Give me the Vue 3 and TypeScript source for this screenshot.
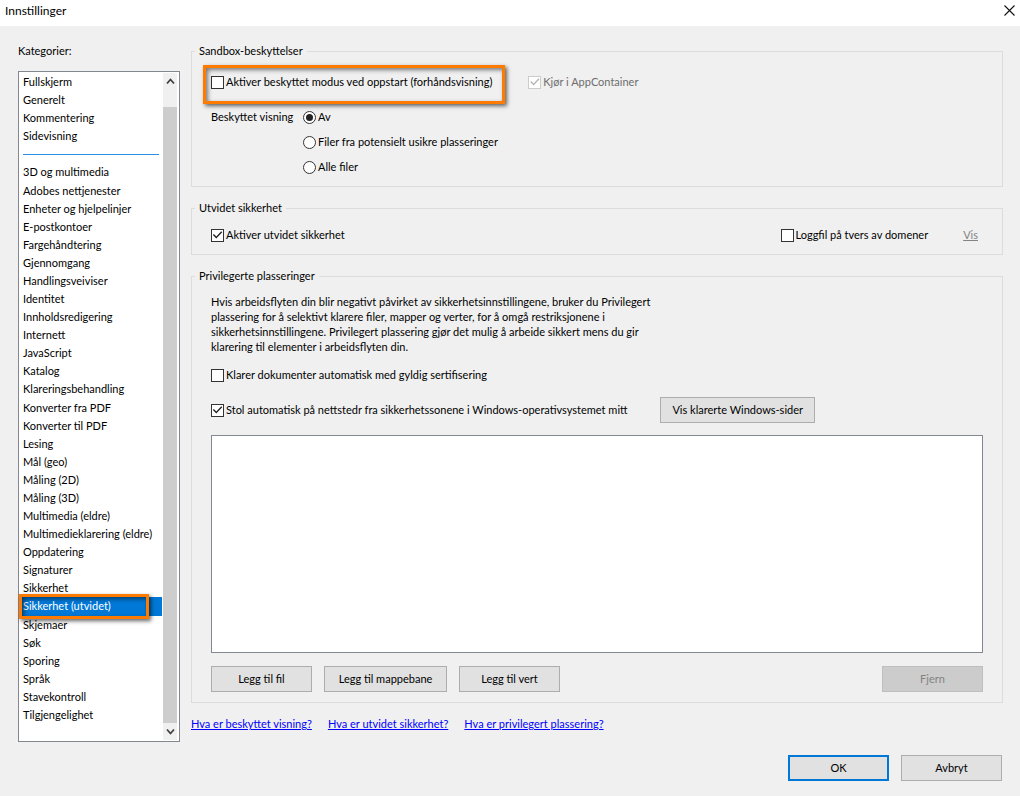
<script setup lang="ts">
import { ref } from 'vue'

const generalCategories: string[] = ['Fullskjerm', 'Generelt', 'Kommentering', 'Sidevisning']
const featureCategories: string[] = [
  '3D og multimedia',
  'Adobes nettjenester',
  'Enheter og hjelpelinjer',
  'E-postkontoer',
  'Fargehåndtering',
  'Gjennomgang',
  'Handlingsveiviser',
  'Identitet',
  'Innholdsredigering',
  'Internett',
  'JavaScript',
  'Katalog',
  'Klareringsbehandling',
  'Konverter fra PDF',
  'Konverter til PDF',
  'Lesing',
  'Mål (geo)',
  'Måling (2D)',
  'Måling (3D)',
  'Multimedia (eldre)',
  'Multimedieklarering (eldre)',
  'Oppdatering',
  'Signaturer',
  'Sikkerhet',
  'Sikkerhet (utvidet)',
  'Skjemaer',
  'Søk',
  'Sporing',
  'Språk',
  'Stavekontroll',
  'Tilgjengelighet',
]

const highlighted = 'Sikkerhet (utvidet)'
const selected = ref<string>(highlighted)
const protectedMode = ref(false)
const appContainer = ref(true)
const protectedView = ref<string>('off')
const viewOptions = [
  { value: 'off', label: 'Av' },
  { value: 'unsafe', label: 'Filer fra potensielt usikre plasseringer' },
  { value: 'all', label: 'Alle filer' },
]
const enhanced = ref(true)
const crossDomainLog = ref(false)
const trustCertified = ref(false)
const trustZones = ref(true)
const helpLinks: string[] = [
  'Hva er beskyttet visning?',
  'Hva er utvidet sikkerhet?',
  'Hva er privilegert plassering?',
]
</script>

<template>
  <div class="dialog">
    <header class="titlebar">
      <h1>Innstillinger</h1>
      <button class="close" type="button" aria-label="Lukk">
        <svg width="11" height="11" viewBox="0 0 11 11" aria-hidden="true">
          <path d="M0.5 0.5L10.5 10.5M10.5 0.5L0.5 10.5" stroke="#111" stroke-width="1.1" fill="none" />
        </svg>
      </button>
    </header>

    <main class="content">
      <section class="sidebar">
        <h2 id="categories-label">Kategorier:</h2>
        <div class="listbox">
          <ul aria-labelledby="categories-label">
            <li v-for="name in generalCategories" :key="name">
              <button type="button" :class="{ active: selected === name }" @click="selected = name">{{ name }}</button>
            </li>
            <li class="separator" role="separator"></li>
            <li v-for="name in featureCategories" :key="name" :class="{ marked: name === highlighted }">
              <button type="button" :class="{ active: selected === name }" @click="selected = name">{{ name }}</button>
            </li>
          </ul>
          <div class="scrollbar">
            <button class="arrow up" type="button" aria-label="Rull opp">
              <svg width="9" height="7" viewBox="0 0 9 7" aria-hidden="true">
                <path d="M1 5.5L4.5 1.5L8 5.5" stroke="#404040" stroke-width="1.8" fill="none" />
              </svg>
            </button>
            <div class="thumb"></div>
            <button class="arrow down" type="button" aria-label="Rull ned">
              <svg width="9" height="7" viewBox="0 0 9 7" aria-hidden="true">
                <path d="M1 1.5L4.5 5.5L8 1.5" stroke="#404040" stroke-width="1.8" fill="none" />
              </svg>
            </button>
          </div>
        </div>
      </section>

      <div class="panels">
        <fieldset class="sandbox">
          <legend>Sandbox-beskyttelser</legend>
          <div class="row first">
            <label class="option marked"><input v-model="protectedMode" type="checkbox" />Aktiver beskyttet modus ved oppstart (forhåndsvisning)</label>
            <label class="option disabled"><input v-model="appContainer" type="checkbox" disabled />Kjør i AppContainer</label>
          </div>
          <div class="view" role="radiogroup" aria-labelledby="view-label">
            <span id="view-label">Beskyttet visning</span>
            <div class="radios">
              <label v-for="option in viewOptions" :key="option.value" class="option">
                <input v-model="protectedView" type="radio" name="protected-view" :value="option.value" />{{ option.label }}
              </label>
            </div>
          </div>
        </fieldset>

        <fieldset class="enhanced">
          <legend>Utvidet sikkerhet</legend>
          <div class="row">
            <label class="option"><input v-model="enhanced" type="checkbox" />Aktiver utvidet sikkerhet</label>
            <label class="option log"><input v-model="crossDomainLog" type="checkbox" />Loggfil på tvers av domener</label>
            <a class="show" href="#">Vis</a>
          </div>
        </fieldset>

        <fieldset class="privileged">
          <legend>Privilegerte plasseringer</legend>
          <p>
            Hvis arbeidsflyten din blir negativt påvirket av sikkerhetsinnstillingene, bruker du Privilegert<br />
            plassering for å selektivt klarere filer, mapper og verter, for å omgå restriksjonene i<br />
            sikkerhetsinnstillingene. Privilegert plassering gjør det mulig å arbeide sikkert mens du gir<br />
            klarering til elementer i arbeidsflyten din.
          </p>
          <label class="option"><input v-model="trustCertified" type="checkbox" />Klarer dokumenter automatisk med gyldig sertifisering</label>
          <div class="row zones">
            <label class="option"><input v-model="trustZones" type="checkbox" />Stol automatisk på nettstedr fra sikkerhetssonene i Windows-operativsystemet mitt</label>
            <button class="push sites" type="button">Vis klarerte Windows-sider</button>
          </div>
          <div class="locations" role="listbox" aria-label="Privilegerte plasseringer" tabindex="0"></div>
          <div class="actions">
            <button class="push" type="button">Legg til fil</button>
            <button class="push folder" type="button">Legg til mappebane</button>
            <button class="push" type="button">Legg til vert</button>
            <button class="push remove" type="button" disabled>Fjern</button>
          </div>
        </fieldset>

        <nav class="help">
          <a v-for="link in helpLinks" :key="link" href="#">{{ link }}</a>
        </nav>
      </div>
    </main>

    <footer class="footer">
      <button class="push primary" type="button">OK</button>
      <button class="push" type="button">Avbryt</button>
    </footer>
  </div>
</template>

<style>
body {
  margin: 0;
  background: #f0f0f0;
}
</style>

<style scoped>
.dialog {
  display: flex;
  flex-direction: column;
  box-sizing: border-box;
  min-height: 100vh;
  padding-bottom: 15px;
  background: #f0f0f0;
  color: #000;
  font: 11px/16px Lato, "Open Sans", sans-serif;
}
button,
input {
  margin: 0;
  font: inherit;
  color: inherit;
}
.titlebar {
  display: flex;
  justify-content: space-between;
  align-items: center;
  height: 26px;
  padding: 0 5px;
  box-sizing: border-box;
  background: #fff;
}
h1,
h2 {
  margin: 0;
  font-size: 11px;
  font-weight: 400;
}
h1 {
  margin-top: -4px;
  font-size: 12px;
}
.close {
  display: flex;
  align-items: center;
  padding: 0;
  margin-top: -6px;
  border: 0;
  background: none;
}
.content {
  flex: 1;
  display: flex;
  gap: 11px;
  padding: 17px 17px 13px 18px;
}
.sidebar {
  display: flex;
  flex-direction: column;
  gap: 12px;
  width: 162px;
}
.listbox {
  flex: 1;
  display: flex;
  padding: 1px 2px 1px 1px;
  border: 1px solid #828790;
  background: #fff;
}
ul {
  flex: 1;
  display: grid;
  grid-auto-rows: minmax(18px, 1fr);
  margin: 0;
  padding: 0 1px 16px 0;
  list-style: none;
}
li {
  position: relative;
  display: flex;
}
li button {
  flex: 1;
  padding: 0 0 0 3px;
  border: 0;
  background: none;
  text-align: left;
  white-space: nowrap;
}
li button.active {
  background: #0078d7;
  color: #fff;
}
.separator {
  align-self: center;
  height: 1px;
  margin: 0 3px;
  background: #2a8fe6;
}
.marked {
  position: relative;
  z-index: 1;
}
.marked::after {
  content: "";
  position: absolute;
  border: 3px solid #ff7b00;
  box-shadow: 2px 2px 4px rgba(0, 0, 0, 0.6), inset 2px 2px 4px rgba(0, 0, 0, 0.5);
  pointer-events: none;
}
li.marked::after {
  inset: -3px 13px -3px -1px;
}
.option.marked::after {
  inset: -9px -13px -14px -8px;
}
.scrollbar {
  display: flex;
  flex-direction: column;
  width: 14px;
  background: #f0f0f0;
}
.arrow {
  display: flex;
  align-items: center;
  justify-content: center;
  height: 17px;
  padding: 0;
  border: 0;
  background: none;
}
.up {
  margin-bottom: 17px;
}
.thumb {
  flex: 1;
  background: #cdcdcd;
}
.panels {
  flex: 1;
  display: flex;
  flex-direction: column;
  gap: 13px;
}
fieldset {
  min-width: 0;
  margin: 0;
  padding: 11px 19px;
  border: 1px solid #dcdcdc;
}
legend {
  margin-left: -16px;
  padding: 0 4px;
}
.row {
  display: flex;
  align-items: center;
}
.sandbox {
  padding-top: 15px;
}
.first {
  gap: 36px;
}
.option {
  display: flex;
  align-items: center;
  gap: 2px;
  white-space: nowrap;
}
.disabled {
  color: #6d6d6d;
}
input {
  position: relative;
  box-sizing: border-box;
  flex: none;
  width: 13px;
  height: 13px;
  appearance: none;
  border: 1px solid #333;
  background: #fff;
}
input[type="checkbox"]:checked::before {
  content: "";
  position: absolute;
  inset: 0;
  background: #222;
  clip-path: polygon(8% 50%, 17% 41%, 39% 63%, 84% 15%, 93% 24%, 39% 82%);
}
input:disabled {
  border-color: #ccc;
}
input[type="checkbox"]:disabled::before {
  background: #b5b5b5;
}
input[type="radio"] {
  border-radius: 50%;
}
input[type="radio"]:checked::before {
  content: "";
  position: absolute;
  inset: 2px;
  border-radius: 50%;
  background: #222;
}
.view {
  display: flex;
  margin-top: 19px;
}
.view > span {
  width: 92px;
}
.radios {
  display: grid;
  gap: 9px;
}
.log {
  margin-left: auto;
}
.show {
  margin: 0 5px 0 35px;
  color: #838383;
}
p {
  margin: 0 0 13px;
  line-height: 15px;
  white-space: nowrap;
}
.zones {
  justify-content: space-between;
  width: 604px;
  margin-top: 14px;
}
.push {
  box-sizing: border-box;
  min-width: 101px;
  height: 26px;
  padding: 0 11px;
  border: 1px solid #adadad;
  background: #e1e1e1;
  white-space: nowrap;
}
.sites {
  min-width: 154px;
}
.locations {
  height: 216px;
  margin-top: 12px;
  border: 1px solid #828790;
  background: #fff;
}
.privileged {
  padding-top: 10px;
  padding-bottom: 10px;
}
.actions {
  display: flex;
  gap: 12px;
  margin-top: 13px;
}
.folder {
  min-width: 123px;
}
.remove {
  margin-left: auto;
  border-color: #bfbfbf;
  background: #ccc;
  color: #838383;
}
.help {
  display: flex;
  gap: 16px;
}
.help a {
  color: #00f;
}
.footer {
  display: flex;
  justify-content: flex-end;
  gap: 12px;
  padding: 0 18px;
}
.primary {
  border: 2px solid #0078d7;
}
</style>
